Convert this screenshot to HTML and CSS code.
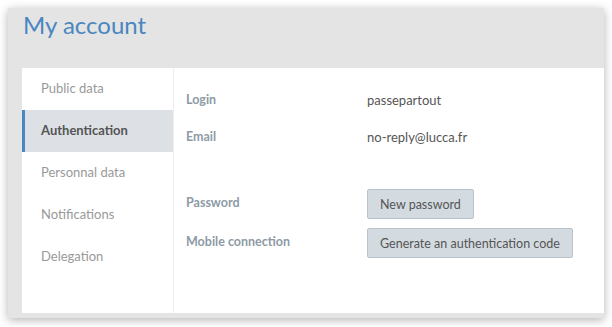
FILE: index.html
```html
<!DOCTYPE html>
<html lang="en">
<head>
    <meta charset="UTF-8">
    <title>My account</title>
    <link rel="stylesheet" href="styles.css">
</head>
<body>

<!-- Fenêtre -->
<div class="window">
    <h1 class="page-title">My account</h1>

    <div class="card">
        <!-- Menu latéral -->
        <ul class="side-menu">
            <li class="menu-item">Public data</li>
            <li class="menu-item active">Authentication</li>
            <li class="menu-item">Personnal data</li>
            <li class="menu-item">Notifications</li>
            <li class="menu-item">Delegation</li>
        </ul>

        <!-- Contenu -->
        <div class="content">
            <div class="field">
                <span class="field-label">Login</span>
                <span class="field-value">passepartout</span>
            </div>
            <div class="field">
                <span class="field-label">Email</span>
                <span class="field-value">no-reply@lucca.fr</span>
            </div>
            <div class="field field-action first-action">
                <span class="field-label">Password</span>
                <button class="action-button">New password</button>
            </div>
            <div class="field field-action">
                <span class="field-label">Mobile connection</span>
                <button class="action-button">Generate an authentication code</button>
            </div>
        </div>
    </div>
</div>

</body>
</html>
```

FILE: styles.css
```css
/* Général */
body {
    margin: 0;
    background-color: #ffffff;
    font-family: 'Lato', 'Open Sans', sans-serif;
    color: #555555;
}

/* Fenêtre grise */
.window {
    margin: 8px;
    width: 596px;
    height: 310px;
    box-sizing: border-box;
    padding-left: 14px;
    background-color: #e4e4e4;
    box-shadow: 0 2px 9px rgba(0, 0, 0, 0.3);
}

.page-title {
    margin: 0;
    height: 60px;
    padding-left: 1px;
    font-size: 24px;
    font-weight: normal;
    line-height: 34px;
    color: #4a86bf;
}

/* Carte blanche */
.card {
    display: flex;
    height: 245px;
    background-color: #ffffff;
}

/* Menu latéral */
.side-menu {
    list-style: none;
    margin: 0;
    padding: 0;
    width: 151px;
    flex-shrink: 0;
    border-right: 1px solid #eeeeee;
}

.menu-item {
    height: 42px;
    line-height: 41px;
    padding-left: 19px;
    font-size: 13px;
    color: #999999;
}

.menu-item.active {
    padding-left: 16px;
    border-left: 3px solid #4a86bf;
    background-color: #dde1e5;
    color: #555555;
    font-weight: bold;
}

/* Contenu */
.content {
    padding: 13px 0 0 12px;
}

.field {
    display: flex;
    align-items: center;
    height: 37px;
    font-size: 13px;
}

.field-label {
    width: 181px;
    font-size: 12.5px;
    font-weight: bold;
    color: #8e9aa6;
}

.field-value {
    color: #555555;
}

.field-action {
    height: 30px;
    margin-bottom: 9px;
}

.field-action .field-label {
    margin-bottom: 3px;
}

.first-action {
    margin-top: 34px;
}

.action-button {
    height: 30px;
    padding: 0 12px;
    border: 1px solid #b9c3cb;
    border-radius: 2px;
    background-color: #d3dbe1;
    font-family: inherit;
    font-size: 12.5px;
    color: #555555;
}
```
